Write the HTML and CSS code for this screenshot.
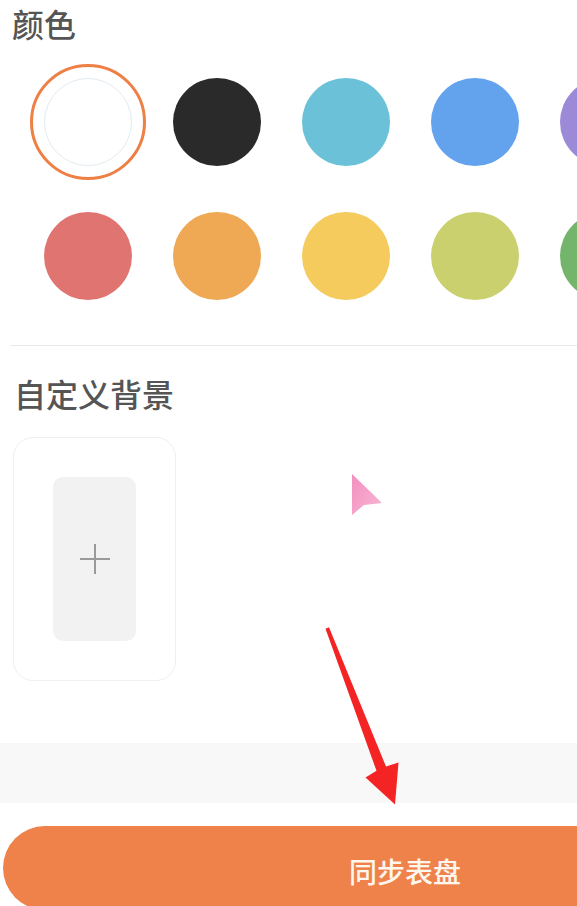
FILE: index.html
```html
<!DOCTYPE html>
<html lang="zh">
<head>
<meta charset="utf-8">
<title>表盘设置</title>
<link rel="stylesheet" href="styles.css">
</head>
<body>
<div class="page">
  <h2 class="title title-color">颜色</h2>
  <div class="swatches">
    <div class="cell"><div class="ring"><div class="dot dot-white"></div></div></div>
    <div class="cell"><div class="dot c-black"></div></div>
    <div class="cell"><div class="dot c-cyan"></div></div>
    <div class="cell"><div class="dot c-blue"></div></div>
    <div class="cell"><div class="dot c-purple"></div></div>
    <div class="cell"><div class="dot c-red"></div></div>
    <div class="cell"><div class="dot c-orange"></div></div>
    <div class="cell"><div class="dot c-yellow"></div></div>
    <div class="cell"><div class="dot c-lime"></div></div>
    <div class="cell"><div class="dot c-green"></div></div>
  </div>
  <div class="divider"></div>
  <h2 class="title title-bg">自定义背景</h2>
  <div class="bg-card">
    <div class="bg-add">
      <svg width="32" height="32" viewBox="0 0 32 32"><path d="M16 1V31M1 16H31" stroke="#9a9a9a" stroke-width="2" fill="none"/></svg>
    </div>
  </div>
  <div class="band"></div>
  <button class="sync">同步表盘</button>

  <svg class="overlay" width="577" height="906" viewBox="0 0 577 906">
    <defs>
      <linearGradient id="pk" x1="0" y1="0" x2="1" y2="1">
        <stop offset="0" stop-color="#f28fbd"/>
        <stop offset="1" stop-color="#f9b6d6"/>
      </linearGradient>
    </defs>
    <polygon class="cursor" points="352,474 382,503 364,505 352,515" fill="url(#pk)"/>
    <polygon points="325.5,628.8 329,627.3 386,766.5 398.5,762.5 395,804.5 365.5,777.5 376.5,770.8" fill="#f52424"/>
  </svg>
</div>
</body>
</html>
```

FILE: styles.css
```css
html, body {
  margin: 0;
  padding: 0;
  background: #ffffff;
}

.page {
  position: relative;
  width: 577px;
  height: 906px;
  overflow: hidden;
  background: #ffffff;
  font-family: "Noto Sans CJK SC", "Noto Sans", sans-serif;
}

.title {
  margin: 0;
  font-size: 32px;
  line-height: 32px;
  font-weight: 500;
  color: #555555;
}

.title-color {
  padding: 7px 0 0 12px;
}

.swatches {
  display: grid;
  grid-template-columns: repeat(5, 129px);
  grid-auto-rows: 116px;
  row-gap: 18px;
  margin: 25px 0 0 23px;
  width: 645px;
}

.cell {
  display: flex;
  align-items: center;
  justify-content: center;
}

.ring {
  width: 110px;
  height: 110px;
  border: 3px solid #ee7f45;
  border-radius: 50%;
  display: flex;
  align-items: center;
  justify-content: center;
}

.dot {
  width: 88px;
  height: 88px;
  border-radius: 50%;
  flex: none;
}

.dot-white {
  box-sizing: border-box;
  background: #ffffff;
  border: 1px solid #e2ebf0;
}

.c-black { background: #2a2a2a; }
.c-cyan { background: #6bc2d8; }
.c-blue { background: #63a3ee; }
.c-purple { background: #9c8ad8; }
.c-red { background: #df7471; }
.c-orange { background: #efa853; }
.c-yellow { background: #f5cb5e; }
.c-lime { background: #cbd06e; }
.c-green { background: #74b56c; }

.divider {
  margin: 31px 0 0 10px;
  height: 1px;
  background: #e9e9e9;
}

.title-bg {
  margin-top: 31px;
  padding-left: 14px;
}

.bg-card {
  box-sizing: border-box;
  width: 163px;
  height: 244px;
  margin: 28px 0 0 13px;
  border: 1px solid #efefef;
  border-radius: 20px;
  display: flex;
  align-items: center;
  justify-content: center;
}

.bg-add {
  width: 83px;
  height: 164px;
  border-radius: 10px;
  background: #f2f2f2;
  display: flex;
  align-items: center;
  justify-content: center;
}

.band {
  margin-top: 62px;
  height: 60px;
  background: #f8f8f8;
}

.sync {
  display: block;
  margin: 23px 0 0 3px;
  width: 804px;
  height: 84px;
  border: none;
  border-radius: 42px;
  background: #ee824a;
  color: #fff6ee;
  font-family: "Noto Sans CJK SC", "Noto Sans", sans-serif;
  font-size: 28px;
  font-weight: 500;
  padding: 6px 0 0 0;
}

.overlay {
  position: absolute;
  left: 0;
  top: 0;
  pointer-events: none;
}

.cursor {
  filter: blur(0.6px);
}
```
